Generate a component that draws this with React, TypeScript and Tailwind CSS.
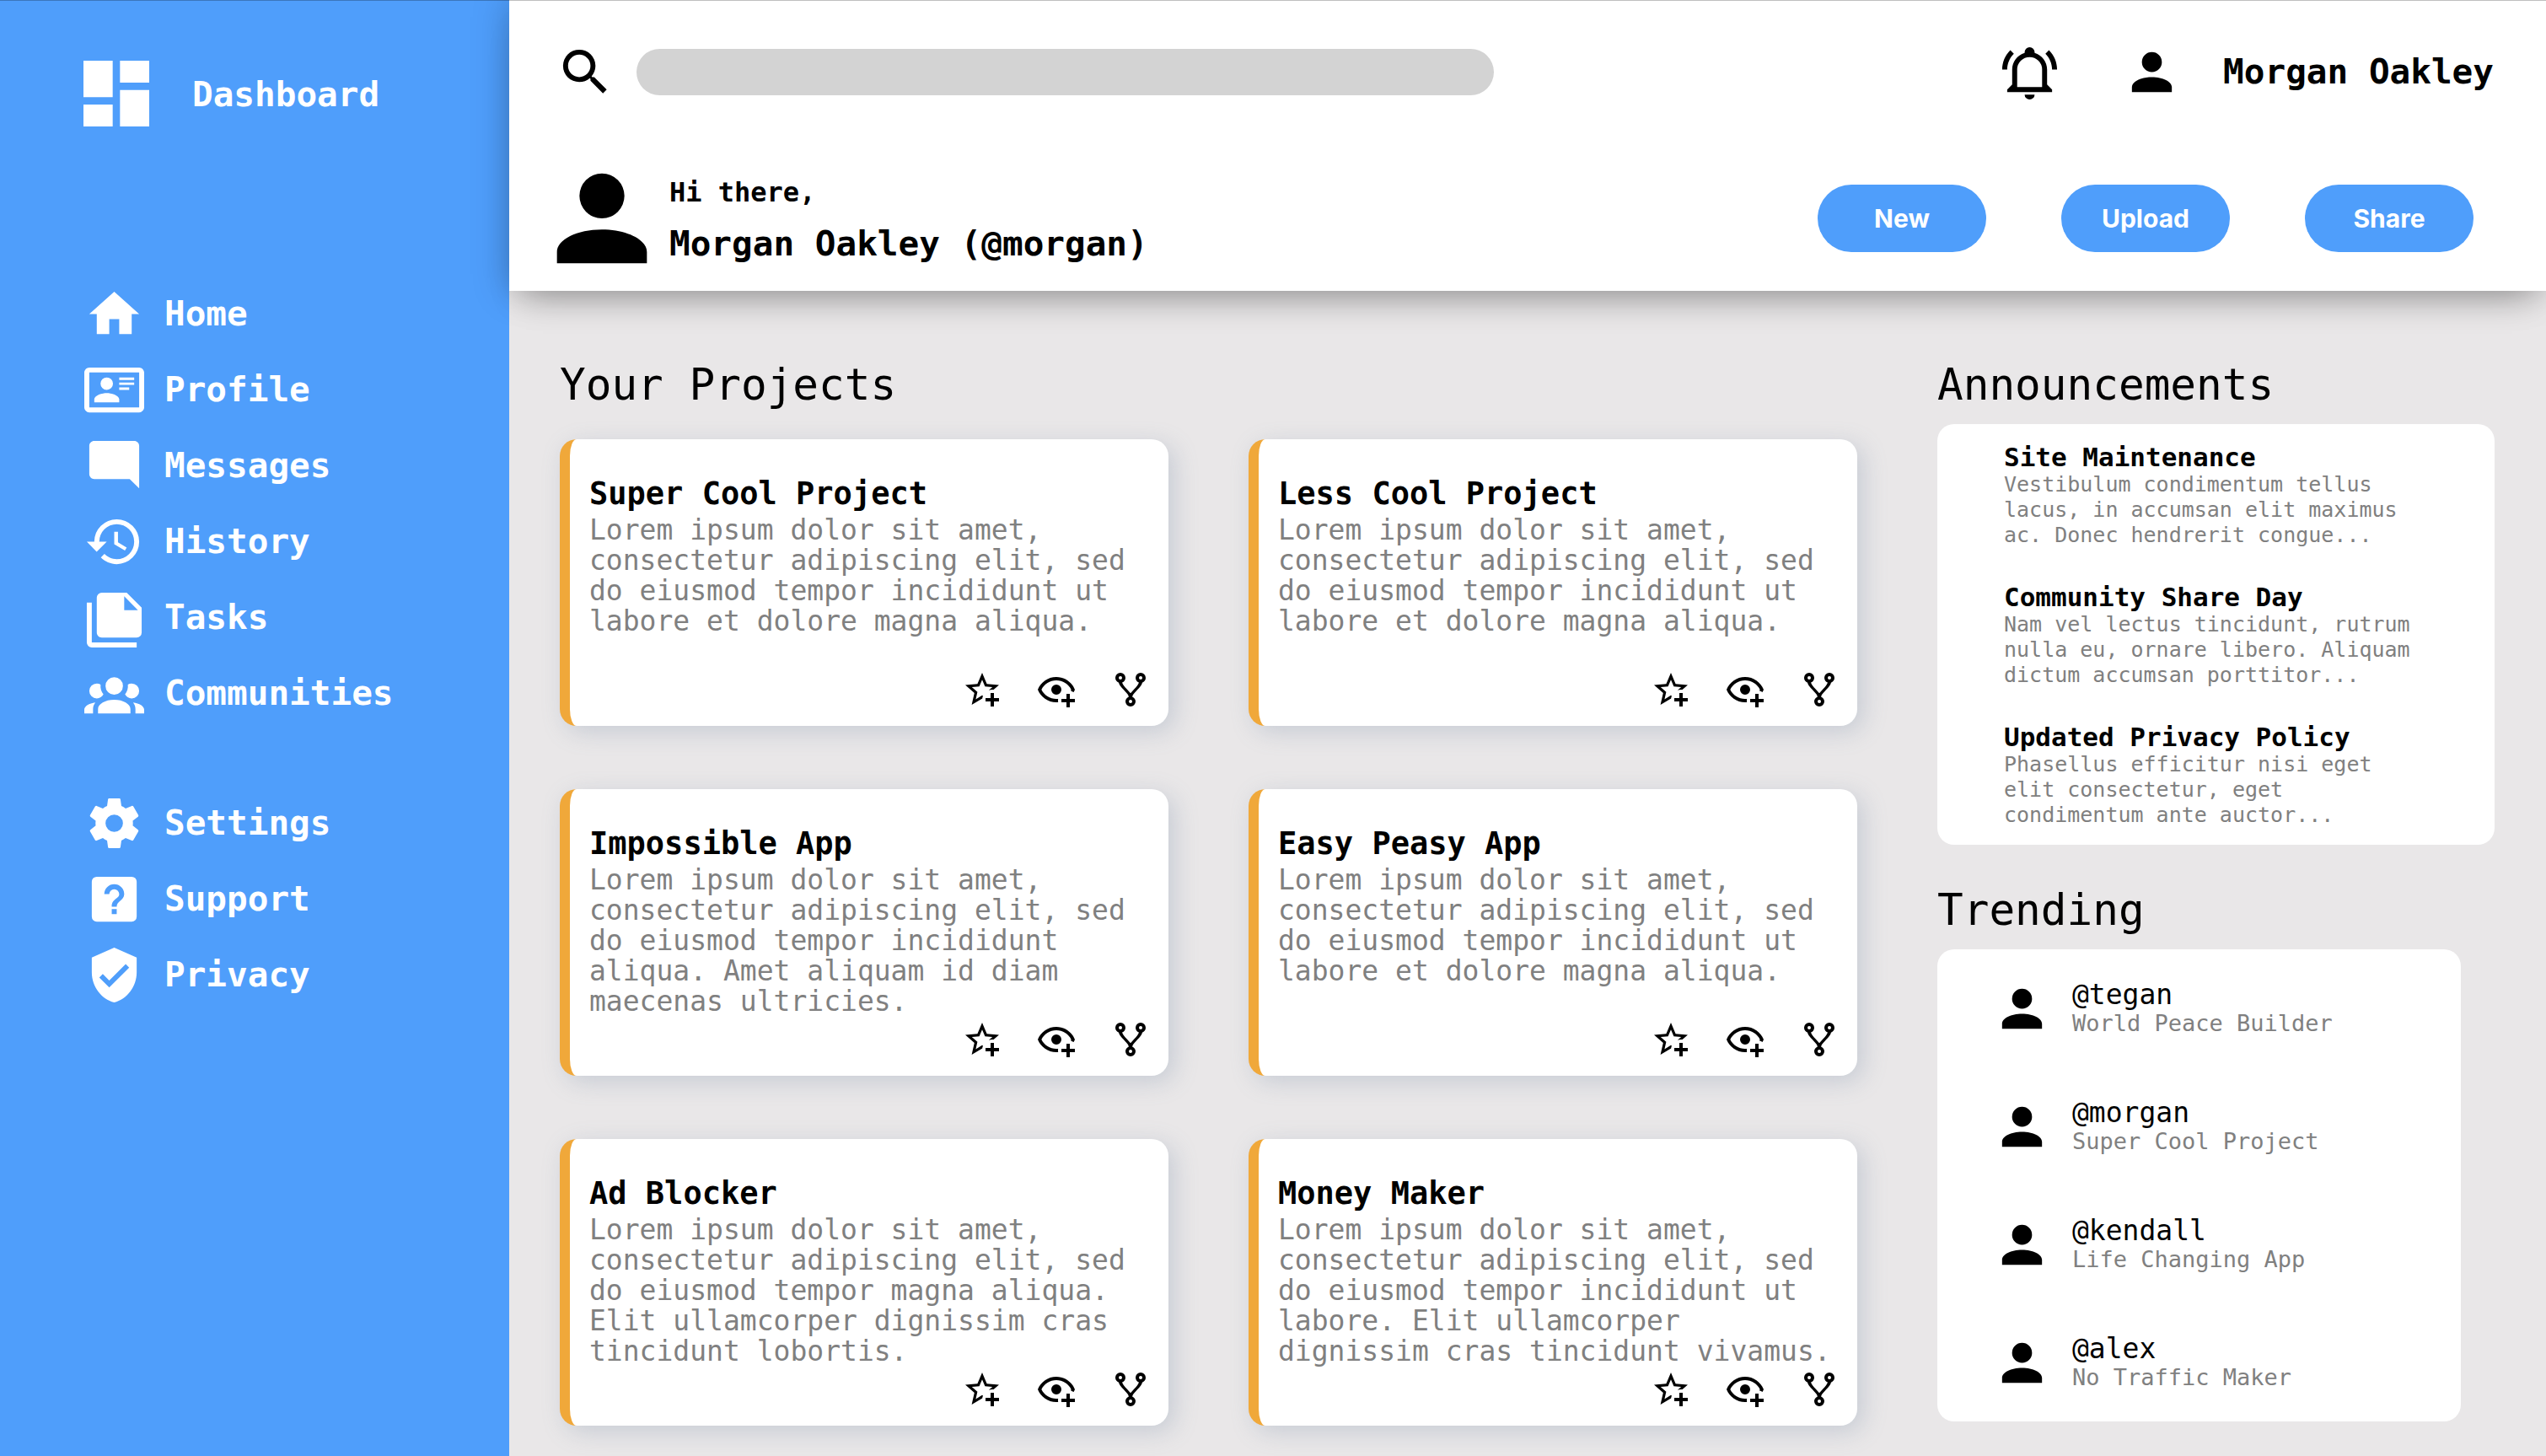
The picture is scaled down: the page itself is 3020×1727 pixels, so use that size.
import type { ReactNode } from "react";

const ICONS = {
  dashboard: "M13 3v6h8V3M13 21h8V11h-8M3 21h8v-6H3M3 13h8V3H3v10Z",
  home: "M10,20V14H14V20H19V12H22L12,3L2,12H5V20H10Z",
  profile:
    "M22,3H2C0.91,3.04 0.04,3.91 0,5V19C0.04,20.09 0.91,20.96 2,21H22C23.09,20.96 23.96,20.09 24,19V5C23.96,3.91 23.09,3.04 22,3M22,19H2V5H22V19M14,17V15.75C14,14.09 10.66,13.25 9,13.25C7.34,13.25 4,14.09 4,15.75V17H14M9,7A2.5,2.5 0 0,0 6.5,9.5A2.5,2.5 0 0,0 9,12A2.5,2.5 0 0,0 11.5,9.5A2.5,2.5 0 0,0 9,7M14,7V8H20V7H14M14,9V10H20V9H14M14,11V12H18V11H14",
  messages: "M22 4c0-1.1-.9-2-2-2H4c-1.1 0-2 .9-2 2v11.3c0 1.1.9 2 2 2h14.2L22 21Z",
  history:
    "M13.5,8H12V13L16.28,15.54L17,14.33L13.5,12.25V8M13,3A9,9 0 0,0 4,12H1L4.96,16.03L9,12H6A7,7 0 0,1 13,5A7,7 0 0,1 20,12A7,7 0 0,1 13,19C11.07,19 9.32,18.21 8.06,16.94L6.64,18.36C8.27,20 10.5,21 13,21A9,9 0 0,0 22,12A9,9 0 0,0 13,3",
  tasks:
    "M3,6V22H21V24H3A2,2 0 0,1 1,22V6H3M16,9H21.5L16,3.5V9M7,2H17L23,8V18A2,2 0 0,1 21,20H7C5.89,20 5,19.1 5,18V4A2,2 0 0,1 7,2Z",
  communities:
    "M12,5.5A3.5,3.5 0 0,1 15.5,9A3.5,3.5 0 0,1 12,12.5A3.5,3.5 0 0,1 8.5,9A3.5,3.5 0 0,1 12,5.5M5,8C5.56,8 6.08,8.15 6.53,8.42C6.38,9.85 6.8,11.27 7.66,12.38C7.16,13.34 6.16,14 5,14A3,3 0 0,1 2,11A3,3 0 0,1 5,8M19,8A3,3 0 0,1 22,11A3,3 0 0,1 19,14C17.84,14 16.84,13.34 16.34,12.38C17.2,11.27 17.62,9.85 17.47,8.42C17.92,8.15 18.44,8 19,8M5.5,18.25C5.5,16.18 8.41,14.5 12,14.5C15.59,14.5 18.5,16.18 18.5,18.25V20H5.5V18.25M0,20V18.5C0,17.11 1.89,15.94 4.45,15.6C3.86,16.28 3.5,17.22 3.5,18.25V20H0M24,20H20.5V18.25C20.5,17.22 20.14,16.28 19.55,15.6C22.11,15.94 24,17.11 24,18.5V20Z",
  settings:
    "M12,15.5A3.5,3.5 0 0,1 8.5,12A3.5,3.5 0 0,1 12,8.5A3.5,3.5 0 0,1 15.5,12A3.5,3.5 0 0,1 12,15.5M19.43,12.97C19.47,12.65 19.5,12.33 19.5,12C19.5,11.67 19.47,11.34 19.43,11L21.54,9.37C21.73,9.22 21.78,8.95 21.66,8.73L19.66,5.27C19.54,5.05 19.27,4.96 19.05,5.05L16.56,6.05C16.04,5.66 15.5,5.32 14.87,5.07L14.5,2.42C14.46,2.18 14.25,2 14,2H10C9.75,2 9.54,2.18 9.5,2.42L9.13,5.07C8.5,5.32 7.96,5.66 7.44,6.05L4.95,5.05C4.73,4.96 4.46,5.05 4.34,5.27L2.34,8.73C2.21,8.95 2.27,9.22 2.46,9.37L4.57,11C4.53,11.34 4.5,11.67 4.5,12C4.5,12.33 4.53,12.65 4.57,12.97L2.46,14.63C2.27,14.78 2.21,15.05 2.34,15.27L4.34,18.73C4.46,18.95 4.73,19.03 4.95,18.95L7.44,17.94C7.96,18.34 8.5,18.68 9.13,18.93L9.5,21.58C9.54,21.82 9.75,22 10,22H14C14.25,22 14.46,21.82 14.5,21.58L14.87,18.93C15.5,18.67 16.04,18.34 16.56,17.94L19.05,18.95C19.27,19.03 19.54,18.95 19.66,18.73L21.66,15.27C21.78,15.05 21.73,14.78 21.54,14.63L19.43,12.97Z",
  support:
    "M11,18H13V16H11V18M12,6A4,4 0 0,0 8,10H10A2,2 0 0,1 12,8A2,2 0 0,1 14,10C14,12 11,11.75 11,15H13C13,12.75 16,12.5 16,10A4,4 0 0,0 12,6M5,3H19A2,2 0 0,1 21,5V19A2,2 0 0,1 19,21H5A2,2 0 0,1 3,19V5A2,2 0 0,1 5,3Z",
  privacy:
    "M10,17L6,13L7.41,11.59L10,14.17L16.59,7.58L18,9M12,1L3,5V11C3,16.55 6.84,21.74 12,23C17.16,21.74 21,16.55 21,11V5L12,1Z",
  search:
    "M9.5,3A6.5,6.5 0 0,1 16,9.5C16,11.11 15.41,12.59 14.44,13.73L14.71,14H15.5L20.5,19L19,20.5L14,15.5V14.71L13.73,14.44C12.59,15.41 11.11,16 9.5,16A6.5,6.5 0 0,1 3,9.5A6.5,6.5 0 0,1 9.5,3M9.5,5C7,5 5,7 5,9.5C5,12 7,14 9.5,14C12,14 14,12 14,9.5C14,7 12,5 9.5,5Z",
  bell: "M10,21H14A2,2 0 0,1 12,23A2,2 0 0,1 10,21M21,19V20H3V19L5,17V11C5,7.9 7.03,5.17 10,4.29C10,4.19 10,4.1 10,4A2,2 0 0,1 12,2A2,2 0 0,1 14,4C14,4.1 14,4.19 14,4.29C16.97,5.17 19,7.9 19,11V17L21,19M17,11A5,5 0 0,0 12,6A5,5 0 0,0 7,11V18H17V11M19.75,3.19L18.33,4.61C20.04,6.3 21,8.6 21,11H23C23,8.07 21.84,5.25 19.75,3.19M1,11H3C3,8.6 3.96,6.3 5.67,4.61L4.25,3.19C2.16,5.25 1,8.07 1,11Z",
  account:
    "M12,4A4,4 0 0,1 16,8A4,4 0 0,1 12,12A4,4 0 0,1 8,8A4,4 0 0,1 12,4M12,14C16.42,14 20,15.79 20,18V20H4V18C4,15.79 7.58,14 12,14Z",
  star: "M5.8 21L7.4 14L2 9.2L9.2 8.6L12 2L14.8 8.6L22 9.2L18.8 12H18C17.3 12 16.6 12.1 15.9 12.4L18.1 10.5L13.7 10.1L12 6.1L10.3 10.1L5.9 10.5L9.2 13.4L8.2 17.7L12 15.4L12.5 15.7C12.3 16.2 12.1 16.8 12.1 17.3L5.8 21M17 14V17H14V19H17V22H19V19H22V17H19V14H17Z",
  watch:
    "M12,4.5C7,4.5 2.73,7.61 1,12C2.73,16.39 7,19.5 12,19.5C12.36,19.5 12.72,19.5 13.08,19.45C13.03,19.13 13,18.82 13,18.5C13,18.17 13.03,17.84 13.08,17.5C12.72,17.5 12.36,17.5 12,17.5C8.24,17.5 4.83,15.36 3.18,12C4.83,8.64 8.24,6.5 12,6.5C15.76,6.5 19.17,8.64 20.82,12C20.7,12.24 20.56,12.45 20.43,12.68C21.09,12.84 21.72,13.11 22.29,13.5C22.56,13 22.8,12.5 23,12C21.27,7.61 17,4.5 12,4.5M12,9A3,3 0 0,0 9,12A3,3 0 0,0 12,15A3,3 0 0,0 15,12A3,3 0 0,0 12,9M18,14.5V17.5H15V19.5H18V22.5H20V19.5H23V17.5H20V14.5H18Z",
  fork: "M6,2A3,3 0 0,1 9,5C9,6.28 8.19,7.38 7.06,7.81C7.15,8.27 7.39,8.83 8,9.63C9,10.92 11,12.83 12,14.17C13,12.83 15,10.92 16,9.63C16.61,8.83 16.85,8.27 16.94,7.81C15.81,7.38 15,6.28 15,5A3,3 0 0,1 18,2A3,3 0 0,1 21,5C21,6.32 20.14,7.45 18.95,7.85C18.87,8.37 18.64,9 18,9.83C17,11.17 15,13.08 14,14.38C13.39,15.17 13.15,15.73 13.06,16.19C14.19,16.62 15,17.72 15,19A3,3 0 0,1 12,22A3,3 0 0,1 9,19C9,17.72 9.81,16.62 10.94,16.19C10.85,15.73 10.61,15.17 10,14.38C9,13.08 7,11.17 6,9.83C5.36,9 5.13,8.37 5.05,7.85C3.86,7.45 3,6.32 3,5A3,3 0 0,1 6,2M6,4A1,1 0 0,0 5,5A1,1 0 0,0 6,6A1,1 0 0,0 7,5A1,1 0 0,0 6,4M18,4A1,1 0 0,0 17,5A1,1 0 0,0 18,6A1,1 0 0,0 19,5A1,1 0 0,0 18,4M12,18A1,1 0 0,0 11,19A1,1 0 0,0 12,20A1,1 0 0,0 13,19A1,1 0 0,0 12,18Z",
};

type IconName = keyof typeof ICONS;

function Icon({ name, className = "size-[71px]" }: { name: IconName; className?: string }) {
  return (
    <svg viewBox="0 0 24 24" fill="currentColor" aria-hidden="true" className={`shrink-0 ${className}`}>
      <path fillRule="evenodd" d={ICONS[name]} />
    </svg>
  );
}

type NavItem = { icon: IconName; label: string };

const MAIN_NAV: NavItem[] = [
  { icon: "home", label: "Home" },
  { icon: "profile", label: "Profile" },
  { icon: "messages", label: "Messages" },
  { icon: "history", label: "History" },
  { icon: "tasks", label: "Tasks" },
  { icon: "communities", label: "Communities" },
];

const MORE_NAV: NavItem[] = [
  { icon: "settings", label: "Settings" },
  { icon: "support", label: "Support" },
  { icon: "privacy", label: "Privacy" },
];

const PROJECTS = [
  {
    title: "Super Cool Project",
    text: "Lorem ipsum dolor sit amet, consectetur adipiscing elit, sed do eiusmod tempor incididunt ut labore et dolore magna aliqua.",
  },
  {
    title: "Less Cool Project",
    text: "Lorem ipsum dolor sit amet, consectetur adipiscing elit, sed do eiusmod tempor incididunt ut labore et dolore magna aliqua.",
  },
  {
    title: "Impossible App",
    text: "Lorem ipsum dolor sit amet, consectetur adipiscing elit, sed do eiusmod tempor incididunt aliqua. Amet aliquam id diam maecenas ultricies.",
  },
  {
    title: "Easy Peasy App",
    text: "Lorem ipsum dolor sit amet, consectetur adipiscing elit, sed do eiusmod tempor incididunt ut labore et dolore magna aliqua.",
  },
  {
    title: "Ad Blocker",
    text: "Lorem ipsum dolor sit amet, consectetur adipiscing elit, sed do eiusmod tempor magna aliqua. Elit ullamcorper dignissim cras tincidunt lobortis.",
  },
  {
    title: "Money Maker",
    text: "Lorem ipsum dolor sit amet, consectetur adipiscing elit, sed do eiusmod tempor incididunt ut labore. Elit ullamcorper dignissim cras tincidunt vivamus.",
  },
];

const ANNOUNCEMENTS = [
  {
    title: "Site Maintenance",
    text: "Vestibulum condimentum tellus lacus, in accumsan elit maximus ac. Donec hendrerit congue...",
  },
  {
    title: "Community Share Day",
    text: "Nam vel lectus tincidunt, rutrum nulla eu, ornare libero. Aliquam dictum accumsan porttitor...",
  },
  {
    title: "Updated Privacy Policy",
    text: "Phasellus efficitur nisi eget elit consectetur, eget condimentum ante auctor...",
  },
];

const TRENDING = [
  { handle: "@tegan", project: "World Peace Builder" },
  { handle: "@morgan", project: "Super Cool Project" },
  { handle: "@kendall", project: "Life Changing App" },
  { handle: "@alex", project: "No Traffic Maker" },
];

function NavList({ items }: { items: NavItem[] }) {
  return (
    <ul className="flex flex-col gap-[19px]">
      {items.map((item) => (
        <li key={item.label}>
          <a href="#" className="flex items-center gap-6 text-[41px] leading-[71px] font-bold">
            <Icon name={item.icon} />
            {item.label}
          </a>
        </li>
      ))}
    </ul>
  );
}

function Sidebar() {
  return (
    <aside className="w-1/5 shrink-0 bg-[#4f9efb] text-white">
      <a href="#" className="mt-[59px] ml-[86px] flex items-center gap-[38px] text-[41px] font-bold">
        <Icon name="dashboard" className="size-[104px]" />
        <span className="pt-1">Dashboard</span>
      </a>
      <nav className="mt-[174px] ml-[100px] flex flex-col gap-[83px]">
        <NavList items={MAIN_NAV} />
        <NavList items={MORE_NAV} />
      </nav>
    </aside>
  );
}

function PillButton({ children }: { children: ReactNode }) {
  return (
    <button
      type="button"
      className="h-20 w-[200px] rounded-full bg-[#4f9efb] font-[Inter,sans-serif] text-[30px] font-bold text-white"
    >
      {children}
    </button>
  );
}

function Header() {
  return (
    <header className="relative h-[345px] bg-white shadow-[0_0_40px_rgba(0,0,0,0.25),0_25px_40px_-20px_rgba(0,0,0,0.25)]">
      <div className="flex items-center pt-[50px] pr-[62px] pl-[55px]">
        <label htmlFor="search" aria-label="Search">
          <Icon name="search" />
        </label>
        <input
          id="search"
          type="search"
          aria-label="Search"
          className="ml-[25px] h-[55px] w-[1017px] max-w-[45%] rounded-full bg-[#d3d3d3] px-6 text-[33px] outline-none"
        />
        <button type="button" aria-label="Notifications" className="ml-auto">
          <Icon name="bell" />
        </button>
        <Icon name="account" className="ml-[74px] size-[71px]" />
        <span className="ml-[49px] text-[41px] leading-[71px] font-bold">Morgan Oakley</span>
      </div>
      <div className="mt-[58px] flex items-center pr-[86px] pl-[30px]">
        <Icon name="account" className="size-40" />
        <div className="font-bold">
          <p className="text-[32px] leading-[48px]">Hi there,</p>
          <p className="mt-3 text-[41px] leading-[50px]">Morgan Oakley (@morgan)</p>
        </div>
        <div className="ml-auto flex gap-[89px]">
          <PillButton>New</PillButton>
          <PillButton>Upload</PillButton>
          <PillButton>Share</PillButton>
        </div>
      </div>
    </header>
  );
}

function CardAction({ icon, label }: { icon: IconName; label: string }) {
  return (
    <button type="button" aria-label={label}>
      <Icon name={icon} className="size-12" />
    </button>
  );
}

function ProjectCard({ title, text }: { title: string; text: string }) {
  return (
    <article className="flex h-[340px] flex-col rounded-[20px] border-l-[12px] border-[#f0a83a] bg-white pt-10 pr-[21px] pb-[19px] pl-[23px] shadow-[7px_7px_28px_rgba(112,134,160,0.28)]">
      <h3 className="text-[37px] leading-[50px] font-bold">{title}</h3>
      <p className="text-[33px] leading-9 text-[#808080]">{text}</p>
      <div className="mt-auto flex h-12 justify-end gap-10">
        <CardAction icon="star" label="Star" />
        <CardAction icon="watch" label="Watch" />
        <CardAction icon="fork" label="Fork" />
      </div>
    </article>
  );
}

export default function App() {
  return (
    <div className="flex min-h-screen bg-[#e9e7e8] font-['DejaVu_Sans_Mono',monospace] text-black">
      <Sidebar />
      <div className="min-w-0 flex-1">
        <Header />
        <main className="grid grid-cols-[1539fr_661fr] gap-[95px] pt-[82px] pr-[61px] pl-[60px]">
          <section>
            <h2 className="text-[51px] leading-[60px]">Your Projects</h2>
            <div className="mt-[34px] grid grid-cols-2 gap-x-[95px] gap-y-[75px]">
              {PROJECTS.map((project) => (
                <ProjectCard key={project.title} title={project.title} text={project.text} />
              ))}
            </div>
          </section>
          <div>
            <section>
              <h2 className="text-[51px] leading-[60px]">Announcements</h2>
              <ul className="mt-4 flex flex-col gap-10 rounded-[20px] bg-white px-[79px] pt-[21px] pb-5">
                {ANNOUNCEMENTS.map((item) => (
                  <li key={item.title}>
                    <h3 className="text-[31px] leading-9 font-bold">{item.title}</h3>
                    <p className="text-[25px] leading-[30px] text-[#808080]">{item.text}</p>
                  </li>
                ))}
              </ul>
            </section>
            <section className="mt-12">
              <h2 className="text-[51px] leading-[60px]">Trending</h2>
              <ul className="mt-4 mr-10 rounded-[20px] bg-white">
                {TRENDING.map((item) => (
                  <li key={item.handle} className="flex h-[140px] items-center gap-6 pl-[65px]">
                    <Icon name="account" />
                    <div>
                      <p className="text-[33px] leading-9">{item.handle}</p>
                      <p className="text-[27px] leading-8 text-[#808080]">{item.project}</p>
                    </div>
                  </li>
                ))}
              </ul>
            </section>
          </div>
        </main>
      </div>
      <div className="absolute inset-x-0 top-0 h-px bg-black/25" />
    </div>
  );
}
